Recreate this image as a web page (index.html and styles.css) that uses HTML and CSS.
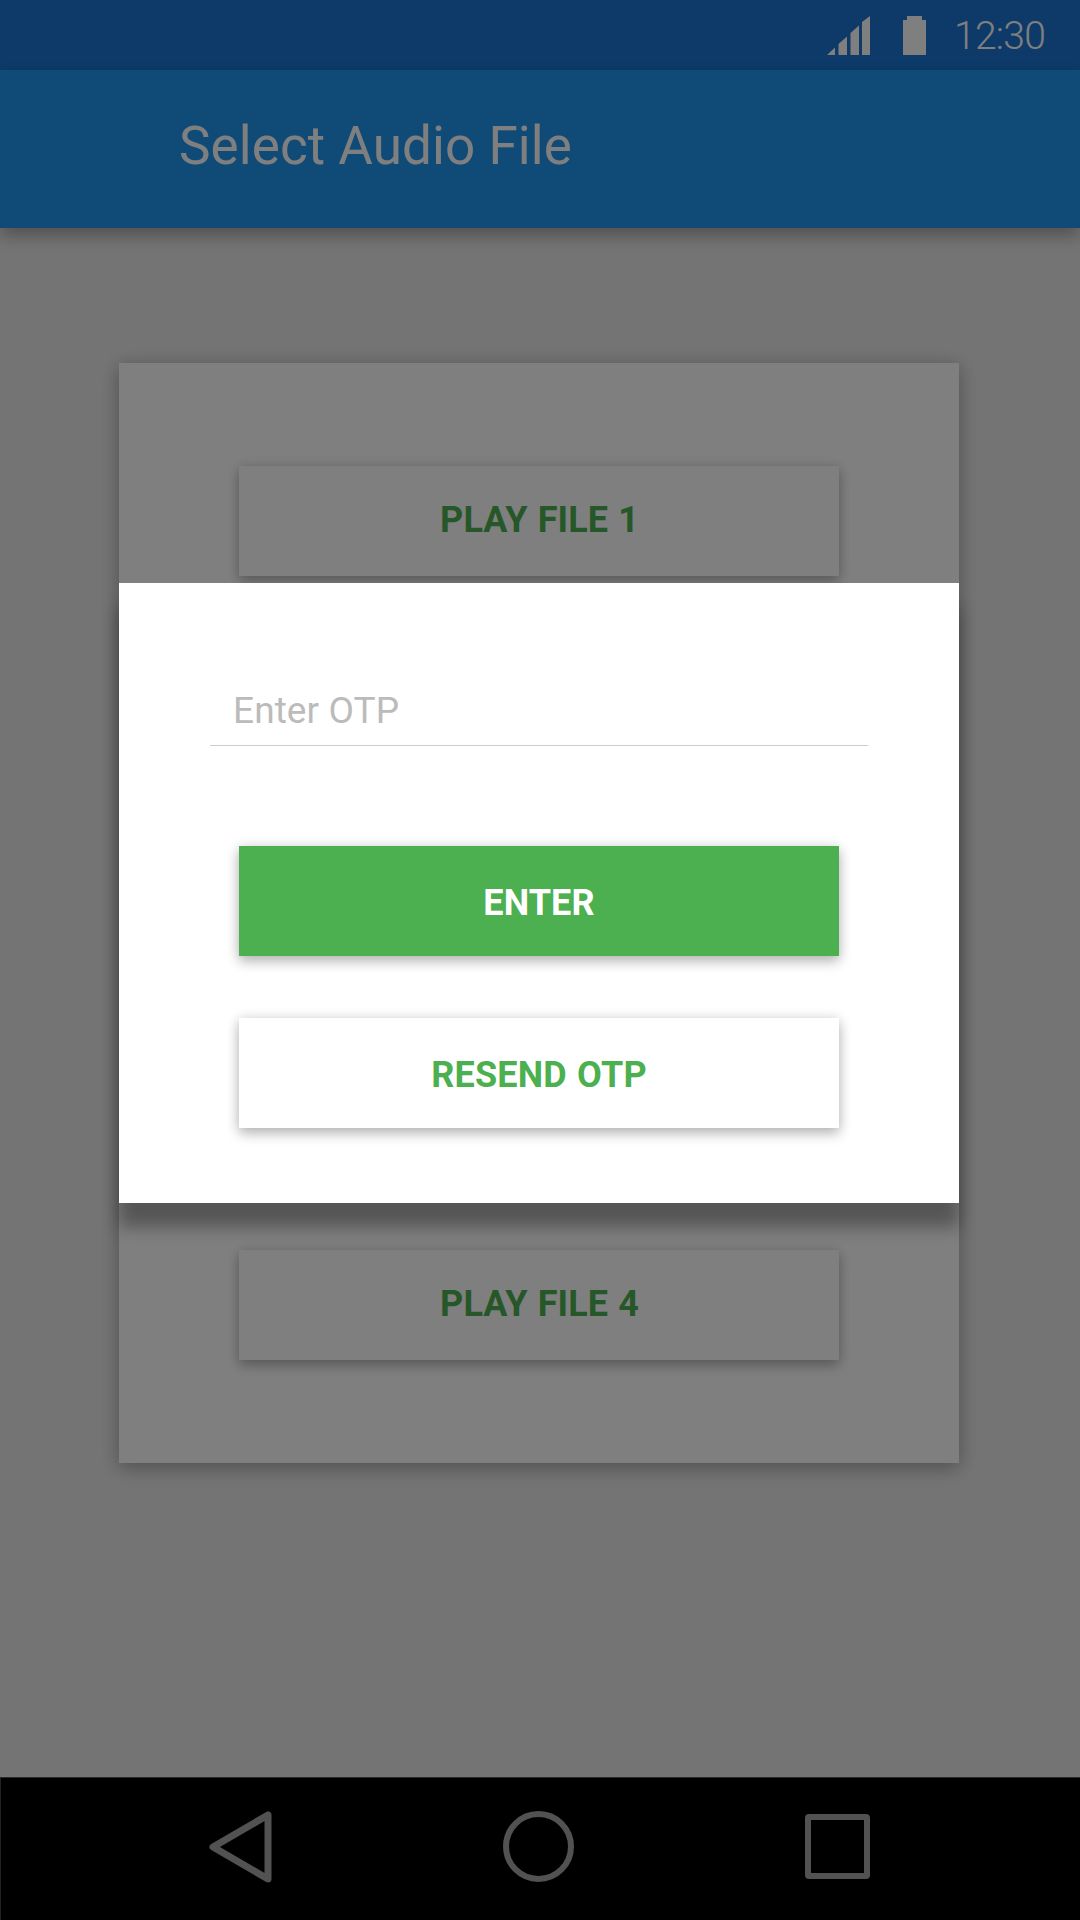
FILE: index.html
```html
<!DOCTYPE html>
<html lang="en">
<head>
<meta charset="utf-8">
<title>Select Audio File</title>
<link rel="stylesheet" href="styles.css">
</head>
<body>
<div class="screen">
  <header class="status-bar">
    <svg class="signal" width="44" height="40" viewBox="0 0 44 40"><path d="M0 39 8 31.500V39zM11.500 39V28L20 20.500V39zM23.500 39V17L32 9.500V39zM35 39V6L43 0V39z"/></svg>
    <svg class="battery" width="23" height="39" viewBox="0 0 23 39"><path d="M4 0H19V4H23V39H0V4H4z"/></svg>
    <time class="clock">12:30</time>
  </header>
  <div class="app-bar"><h1 class="title">Select Audio File</h1></div>
  <main class="content">
    <section class="card">
      <button class="button">PLAY FILE 1</button>
      <button class="button">PLAY FILE 4</button>
    </section>
  </main>
  <nav class="nav-bar">
    <svg class="back" width="64" height="74" viewBox="0 0 64 74"><path d="M59 5V69L4 37z" stroke-linejoin="round"/></svg>
    <svg width="72" height="72" viewBox="0 0 72 72"><circle cx="35.500" cy="35.500" r="32.500"/></svg>
    <svg width="66" height="66" viewBox="0 0 66 66"><rect x="3" y="3" width="59" height="59" rx="1"/></svg>
  </nav>
  <div class="scrim">
    <form class="dialog">
      <input class="otp" type="text" placeholder="Enter OTP">
      <button class="button button-primary" type="button">ENTER</button>
      <button class="button button-resend" type="button">RESEND OTP</button>
    </form>
  </div>
</div>
</body>
</html>
```
FILE: styles.css
```css
* { box-sizing: border-box; }
body { margin: 0; font-family: Roboto, sans-serif; }
.screen {
  position: relative;
  display: flex;
  flex-direction: column;
  width: 1080px;
  height: 1920px;
  background: #e9e9e9;
  overflow: hidden;
}
.status-bar {
  display: flex;
  align-items: flex-start;
  height: 70px;
  padding: 16px 35px 0 0;
  justify-content: flex-end;
  background: #1a75d3;
  color: #fff;
}
.status-bar svg { fill: #fff; }
.signal { margin-right: 32px; }
.battery { margin-right: 28px; }
.clock {
  width: 91px;
  font-size: 39px;
  font-weight: 300;
  line-height: 40px;
  text-align: right;
  white-space: nowrap;
  letter-spacing: -.7px;
}
.app-bar {
  height: 158px;
  padding: 38px 0 0 179px;
  background: #2196f1;
  color: #fff;
  box-shadow: 0 8px 16px rgba(0, 0, 0, .3);
}
.title { margin: 0; font-size: 53px; font-weight: 400; line-height: 76px; letter-spacing: .08px; }
.content { flex: 1; padding: 135px 121px 0 119px; }
.card {
  display: flex;
  flex-direction: column;
  justify-content: space-between;
  align-items: center;
  height: 1100px;
  padding: 103px 0;
  background: #fff;
  box-shadow: 0 0 18px rgba(0, 0, 0, .1), 0 6px 18px rgba(0, 0, 0, .24);
}
.button {
  width: 600px;
  height: 110px;
  padding: 0 0 3px 1px;
  border: 0;
  background: #fff;
  color: #4caf50;
  font: 700 36px Roboto, sans-serif;
  letter-spacing: .1px;
  word-spacing: 1px;
  box-shadow: 0 0 12px rgba(0, 0, 0, .12), 0 6px 12px rgba(0, 0, 0, .24);
}
.nav-bar {
  display: flex;
  justify-content: space-between;
  align-items: center;
  height: 143px;
  padding: 0 209px 5px 208px;
  border-top: 1px solid #555;
  border-left: 1px solid #444;
  background: #000;
}
.nav-bar svg { fill: none; stroke: #a4a4a4; stroke-width: 6; }
.nav-bar .back { stroke-width: 7; }
.scrim {
  position: absolute;
  inset: 0;
  padding: 583px 121px 0 119px;
  background: rgba(0, 0, 0, .5);
}
.dialog {
  display: flex;
  flex-direction: column;
  align-items: center;
  height: 620px;
  padding-top: 87px;
  background: #fff;
  box-shadow: 0 24px 16px rgba(0, 0, 0, .33);
}
.otp {
  width: 658px;
  height: 76px;
  margin-bottom: 100px;
  padding: 6px 24px 0 23px;
  border: 0;
  border-bottom: 1px solid #ccc;
  background: transparent;
  font: 400 37px Roboto, sans-serif;
  letter-spacing: .1px;
}
.otp::placeholder { color: #bbb; opacity: 1; }
.dialog .button { padding: 3px 0 0; margin-bottom: 62px; }
.button.button-primary { background: #4caf50; color: #fff; }
.button.button-resend { letter-spacing: .2px; }
```
